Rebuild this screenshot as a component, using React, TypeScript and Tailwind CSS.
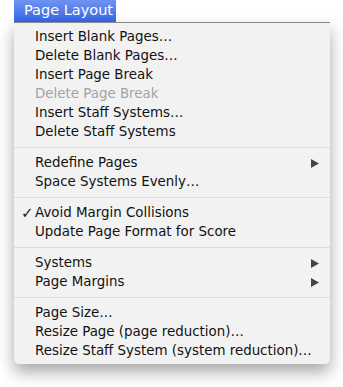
const groups: { label: string; disabled?: boolean; checked?: boolean; sub?: boolean }[][] = [
  [
    { label: "Insert Blank Pages…" },
    { label: "Delete Blank Pages…" },
    { label: "Insert Page Break" },
    { label: "Delete Page Break", disabled: true },
    { label: "Insert Staff Systems…" },
    { label: "Delete Staff Systems" },
  ],
  [{ label: "Redefine Pages", sub: true }, { label: "Space Systems Evenly…" }],
  [{ label: "Avoid Margin Collisions", checked: true }, { label: "Update Page Format for Score" }],
  [{ label: "Systems", sub: true }, { label: "Page Margins", sub: true }],
  [
    { label: "Page Size…" },
    { label: "Resize Page (page reduction)…" },
    { label: "Resize Staff System (system reduction)…" },
  ],
];

export default function App() {
  return (
    <div
      className="w-[343px] h-[387px] bg-white relative"
      style={{ fontFamily: '"DejaVu Sans", sans-serif' }}
    >
      {/* menu title */}
      <div className="ml-[14px] w-[102px] h-[22px] flex items-center pl-[10px] text-[14.5px] text-white bg-gradient-to-b from-[#6f93f2] to-[#3566e6]">
        Page Layout
      </div>

      {/* dropdown */}
      <div className="ml-[14px] w-[316px] bg-[#f2f2f2] border-t border-[#8a8a8a] rounded-b-[5px] pt-[5px] pb-[3px] shadow-[0_8px_16px_rgba(0,0,0,0.35)]">
        {groups.map((g, gi) => (
          <div key={gi}>
            {gi > 0 && (
              <div className="h-[12px] pt-[5px]">
                <div className="h-px bg-[#dcdcdc]" />
              </div>
            )}
            {g.map((it) => (
              <div
                key={it.label}
                className={`h-[19px] flex items-center pl-[7px] pr-[11px] text-[13.4px] ${
                  it.disabled ? "text-[#a3a3a3]" : "text-[#111]"
                }`}
              >
                <span className="w-[14px] text-[15px] leading-none text-[#222]">{it.checked ? "✓" : ""}</span>
                <span className="flex-1 whitespace-nowrap">{it.label}</span>
                {it.sub && (
                  <svg width="8" height="9" viewBox="0 0 8 9">
                    <path d="M0 0 L8 4.5 L0 9 Z" fill="#444" />
                  </svg>
                )}
              </div>
            ))}
          </div>
        ))}
      </div>
    </div>
  );
}
